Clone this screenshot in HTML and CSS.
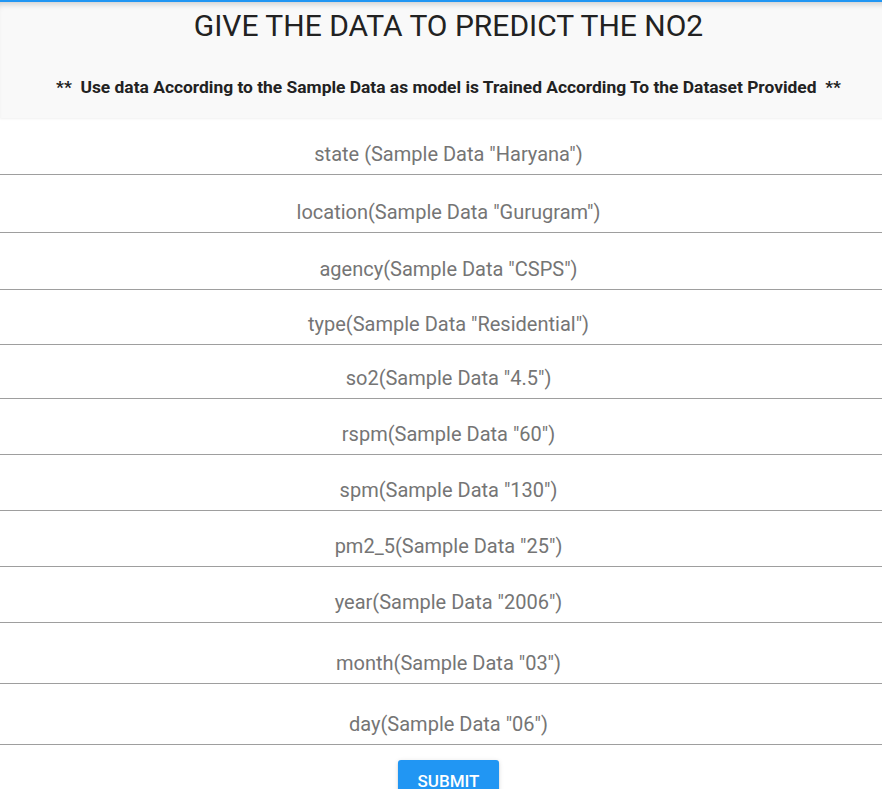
FILE: index.html
```html
<!DOCTYPE html>
<html lang="en">
<head>
    <meta charset="UTF-8">
    <meta name="viewport" content="width=device-width, initial-scale=1.0">
    <title>NO2 Prediction</title>
    <link rel="stylesheet" href="styles.css">
</head>
<body>

<div class="page">
    <!-- Title block -->
    <header class="top">
        <h1>GIVE THE DATA TO PREDICT THE NO2</h1>
        <p class="note">**&nbsp; Use data According to the Sample Data as model is Trained According To the Dataset Provided &nbsp;**</p>
    </header>

    <!-- Prediction form -->
    <form class="predict-form" action="#" method="post">
        <div class="field"><input type="text" name="state" placeholder='state (Sample Data "Haryana")'></div>
        <div class="field"><input type="text" name="location" placeholder='location(Sample Data "Gurugram")'></div>
        <div class="field"><input type="text" name="agency" placeholder='agency(Sample Data "CSPS")'></div>
        <div class="field"><input type="text" name="type" placeholder='type(Sample Data "Residential")'></div>
        <div class="field"><input type="text" name="so2" placeholder='so2(Sample Data "4.5")'></div>
        <div class="field"><input type="text" name="rspm" placeholder='rspm(Sample Data "60")'></div>
        <div class="field"><input type="text" name="spm" placeholder='spm(Sample Data "130")'></div>
        <div class="field"><input type="text" name="pm2_5" placeholder='pm2_5(Sample Data "25")'></div>
        <div class="field"><input type="text" name="year" placeholder='year(Sample Data "2006")'></div>
        <div class="field field-wide"><input type="text" name="month" placeholder='month(Sample Data "03")'></div>
        <div class="field field-wide"><input type="text" name="day" placeholder='day(Sample Data "06")'></div>

        <div class="actions">
            <button type="submit" class="btn">SUBMIT</button>
        </div>
    </form>
</div>

</body>
</html>
```

FILE: styles.css
```css
html, body {
    margin: 0;
    overflow-x: hidden;
}

body {
    background-color: #fff;
    font-family: Roboto, "Liberation Sans", sans-serif;
    color: #333;
}

/* form is a little wider than the window, like the original grid row */
.page {
    width: calc(100% + 15px);
}

.top {
    background-color: #f9f9f9;
    border-top: 2px solid #2196f3;
    box-shadow: inset 0 6px 6px -4px rgba(0, 0, 0, 0.18), 0 1px 2px rgba(0, 0, 0, 0.06);
    height: 116px;
    text-align: center;
}

.top h1 {
    margin: 0;
    padding-top: 5px;
    font-size: 30px;
    font-weight: 400;
    line-height: 38px;
    color: #222;
}

.note {
    margin: 31px 0 0;
    font-size: 17.4px;
    font-weight: 700;
    line-height: 22px;
    color: #222;
}

.field {
    margin-top: 15px;
}

/* the first rows sit a bit looser, then tighten */
.field:nth-child(1) { margin-top: 16px; }
.field:nth-child(2) { margin-top: 17px; }
.field:nth-child(3) { margin-top: 16px; }
.field:nth-child(4) { margin-top: 14px; }
.field:nth-child(5) { margin-top: 13px; }

.field-wide {
    margin-top: 20px;
}

.field input {
    display: block;
    width: 100%;
    height: 40px;
    margin: 0;
    padding: 0;
    border: none;
    border-bottom: 1px solid #9e9e9e;
    outline: none;
    background: transparent;
    box-sizing: content-box;
    text-align: center;
    font-family: inherit;
    font-size: 20px;
    color: #333;
}

.field input::placeholder {
    color: #757575;
}

.actions {
    text-align: center;
    padding-top: 15px;
}

.btn {
    height: 42px;
    padding: 0 20px;
    border: none;
    border-radius: 3px;
    background-color: #2196f3;
    color: #fff;
    font-family: inherit;
    font-size: 17px;
    font-weight: 500;
    box-shadow: 0 2px 2px rgba(0, 0, 0, 0.14), 0 1px 5px rgba(0, 0, 0, 0.12);
}
```
